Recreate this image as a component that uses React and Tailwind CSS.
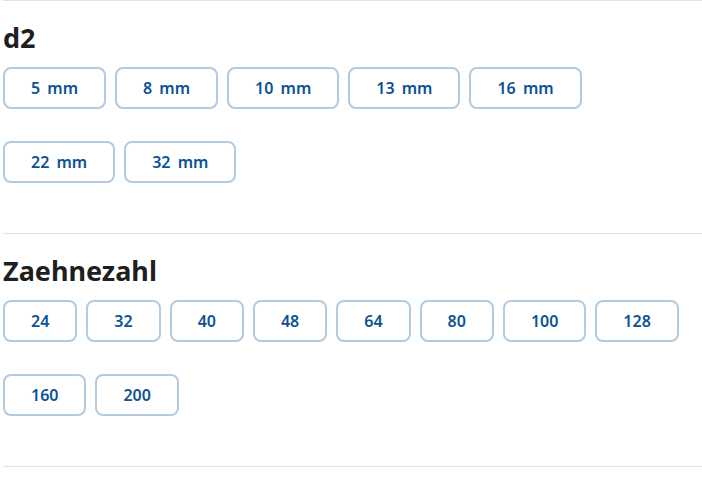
const sections = [
  { title: 'd2', rows: [['5 mm', '8 mm', '10 mm', '13 mm', '16 mm'], ['22 mm', '32 mm']] },
  { title: 'Zaehnezahl', rows: [['24', '32', '40', '48', '64', '80', '100', '128'], ['160', '200']] },
]

export default function App() {
  return (
    <div className="min-h-screen bg-white pl-[3px]" style={{ fontFamily: '"Noto Sans", "Open Sans", sans-serif' }}>
      {sections.map((s) => (
        <section key={s.title} className="border-t border-[#dfe3e8] pt-[21px] pb-[50px]">
          <h2 className="text-[27px] leading-[32px] font-bold text-[#1f1f1f] mb-[13px]">{s.title}</h2>
          <div className="flex flex-col gap-[32px]">
            {s.rows.map((row, i) => (
              <div key={i} className="flex gap-[9px]">
                {row.map((v) => (
                  <button
                    key={v}
                    className="h-[42px] px-[26px] rounded-[8px] border-2 border-[#b3cbe1] bg-white text-[16px] font-semibold text-[#0b5394] [word-spacing:3px]"
                  >
                    {v}
                  </button>
                ))}
              </div>
            ))}
          </div>
        </section>
      ))}
      <div className="border-t border-[#dfe3e8]" />
    </div>
  )
}
